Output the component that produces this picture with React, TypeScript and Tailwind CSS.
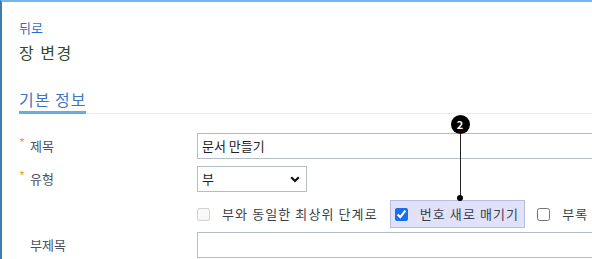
import React from 'react';

const font = "font-['Noto_Sans_CJK_KR','Noto_Sans',sans-serif]";

function Label({ text, required }: { text: string; required?: boolean }) {
  return (
    <div className="relative w-[178px] shrink-0 pl-[11px] text-[13px] leading-[16px] text-[#4a5263]">
      {required && <span className="absolute left-0 top-[-3px] text-[13px] text-[#f2a33a]">*</span>}
      {text}
    </div>
  );
}

export default function App() {
  return (
    <div
      className={`relative h-[259px] w-[592px] overflow-hidden border-l-2 border-t-2 border-l-[#3d7cab] border-t-[#74b7ef] bg-white ${font}`}
    >
      <div className="pl-[17px] pt-[18px]">
        <a className="block text-[13px] leading-[16px] text-[#1f6fd1]">뒤로</a>
        <h1 className="mt-[6px] text-[16px] leading-[20px] tracking-[1.5px] text-[#2f4a2a]">장 변경</h1>

        <div className="mt-[27px] flex border-b border-[#e6eef6]">
          <span className="-mb-px border-b-[3px] border-[#62ade8] pb-[2px] text-[16px] leading-[20px] tracking-[1px] text-[#3f74c4]">
            기본 정보
          </span>
        </div>

        <div className="mt-[19px] flex h-[26px] items-center">
          <Label text="제목" required />
          <div className="flex h-[26px] w-[420px] shrink-0 items-center border border-[#b3bec6] px-[4px] text-[13px] text-[#222]">
            문서 만들기
          </div>
        </div>

        <div className="mt-[7px] flex h-[26px] items-center">
          <Label text="유형" required />
          <div className="flex h-[26px] w-[110px] items-center justify-between border border-[#b3bec6] pl-[4px] pr-[6px] text-[13px] text-[#222]">
            <span>부</span>
            <svg width="10" height="7" viewBox="0 0 10 7">
              <path d="M1.2 1.2 L5 5 L8.8 1.2" fill="none" stroke="#111" strokeWidth="2.2" />
            </svg>
          </div>
        </div>

        <div className="mt-[8px] flex h-[28px] items-center whitespace-nowrap">
          <div className="w-[178px] shrink-0" />
          <label className="flex shrink-0 items-center text-[13px] leading-[16px] tracking-[1.1px] text-[#3a3f4a]">
            <input type="checkbox" disabled className="m-0 h-[13px] w-[13px]" />
            <span className="ml-[12px]">부와 동일한 최상위 단계로</span>
          </label>
          <label className="ml-[12px] flex h-[28px] shrink-0 items-center border border-[#b9bde3] bg-[#e1e1fa] pl-[4px] pr-[5px] text-[13px] leading-[16px] tracking-[1.1px] text-[#3a3f4a]">
            <input type="checkbox" defaultChecked className="m-0 h-[13px] w-[13px] accent-[#1a6fe8]" />
            <span className="ml-[12px]">번호 새로 매기기</span>
          </label>
          <label className="ml-[12px] flex shrink-0 items-center text-[13px] leading-[16px] tracking-[1.1px] text-[#3a3f4a]">
            <input type="checkbox" className="m-0 h-[13px] w-[13px]" />
            <span className="ml-[12px]">부록</span>
          </label>
        </div>

        <div className="mt-[4px] flex h-[26px] items-center">
          <Label text="부제목" />
          <div className="h-[26px] w-[420px] shrink-0 border border-[#b3bec6]" />
        </div>
      </div>

      <div className="absolute left-[448px] top-[113px] flex w-[20px] flex-col items-center">
        <div className="flex h-[19px] w-[19px] items-center justify-center rounded-full bg-black text-[11px] font-bold leading-none text-white">
          2
        </div>
        <div className="h-[64px] w-px bg-[#222]" />
        <div className="-mt-[3px] h-[6px] w-[6px] rounded-full bg-black" />
      </div>
    </div>
  );
}
